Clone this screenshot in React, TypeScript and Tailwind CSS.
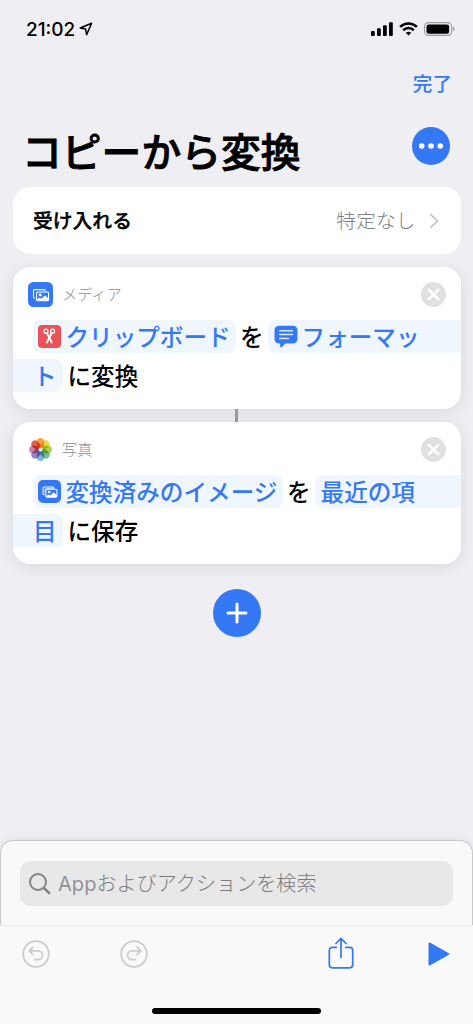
import type { ReactNode } from 'react';

const PhotosStack = ({ className, layered }: { className?: string; layered?: boolean }) => (
  <svg viewBox="0 0 25 25" className={className} fill="none">
    <rect width="25" height="25" rx="5.5" fill="#3478f6" />
    <path d="M7.4 16H6.8A1.3 1.3 0 0 1 5.5 14.7V8.9A1.3 1.3 0 0 1 6.8 7.6H16A1.3 1.3 0 0 1 17.3 8.9V9.3" stroke="#fff" strokeWidth="1.1" />
    {layered && <path d="M7.6 14V10.6A1.2 1.2 0 0 1 8.8 9.4H17" stroke="#fff" strokeWidth="0.8" />}
    <rect x="8.6" y="10" width="12" height="8.8" rx="1.3" stroke="#fff" strokeWidth="1.1" />
    <circle cx="12.2" cy="13" r="1.4" fill="#fff" />
    <path d="M8.8 17.4L11.3 15.8L13.2 16.8L17 13.4L20.4 16.2V18.6H8.8Z" fill="#fff" />
  </svg>
);

const PETALS = [
  { angle: 0, color: '#f3a53c' },
  { angle: 45, color: '#eadb45' },
  { angle: 90, color: '#b0d05a' },
  { angle: 135, color: '#74bd96' },
  { angle: 180, color: '#82b1e4' },
  { angle: 225, color: '#9583c0' },
  { angle: 270, color: '#cb82b0' },
  { angle: 315, color: '#ea5c48' }
];

const PhotosFlower = () => (
  <svg viewBox="-12.5 -12.5 25 25" className="w-[25px] h-[25px] isolate">
    {PETALS.map(({ angle, color }) => (
      <rect
        key={angle}
        x="-3.7"
        y="-11.4"
        width="7.4"
        height="9.8"
        rx="3.7"
        fill={color}
        transform={`rotate(${angle})`}
        className="mix-blend-multiply"
      />
    ))}
    <circle r="1" fill="#fff" />
  </svg>
);

const Scissors = () => (
  <svg viewBox="0 0 23 23" className="w-[23px] h-[23px] shrink-0" fill="none">
    <rect width="23" height="23" rx="4" fill="#eb5159" />
    <g stroke="#fff" strokeWidth="1.3" strokeLinecap="round">
      <circle cx="8" cy="6.2" r="2" />
      <circle cx="14.6" cy="6.2" r="2" />
      <path d="M9 8.2L13.7 17.4M13.6 8.2L8.9 17.4" strokeWidth="2" />
    </g>
  </svg>
);

const MessageBubble = () => (
  <svg viewBox="0 0 24 23" className="w-6 h-[23px] shrink-0">
    <path d="M5 .7H19A4.5 4.5 0 0 1 23.5 5.2V14A4.5 4.5 0 0 1 19 18.5H11.5L7.6 22.3Q6.2 23 6.2 21.5V18.5H5A4.5 4.5 0 0 1 .5 14V5.2A4.5 4.5 0 0 1 5 .7Z" fill="#3478f6" />
    <path d="M5.6 5.8H18.4M5.6 9.6H18.4M5.6 13.4H14.4" stroke="#dbe8fd" strokeWidth="1.5" strokeLinecap="round" />
  </svg>
);

const CloseButton = () => (
  <button className="ml-auto">
    <svg viewBox="0 0 25 25" className="w-[25px] h-[25px] block">
      <circle cx="12.5" cy="12.5" r="12.5" fill="#e0e0e2" />
      <path d="M7.8 7.8L17.2 17.2M17.2 7.8L7.8 17.2" stroke="#fff" strokeWidth="2.6" strokeLinecap="round" />
    </svg>
  </button>
);

interface ActionCardProps {
  icon: ReactNode;
  app: string;
  children: ReactNode;
}

const ActionCard = ({ icon, app, children }: ActionCardProps) => (
  <section className="h-[142.5px] rounded-[17px] bg-white pt-[15px] overflow-hidden shadow-[0_3px_16px_rgba(0,0,0,0.09)]">
    <header className="flex items-center pl-[15px] pr-[15px] h-[25px]">
      {icon}
      <span className="ml-[9.5px] pt-[2px] text-[15.2px] leading-none font-light text-[#8e8e92]">{app}</span>
      <CloseButton />
    </header>
    <div className="mt-[13px] flex flex-col gap-1.5 text-[23.6px] leading-[35px] font-medium whitespace-nowrap">
      {children}
    </div>
  </section>
);

const StatusBar = () => (
  <div className="flex h-[58px] items-center pl-[26px] pr-[18px]">
    <span className="font-['Inter'] text-[19px] leading-none font-medium">21:02</span>
    <svg viewBox="0 0 14 14" className="ml-[4px] w-[14px] h-[14px]">
      <path d="M12.6 1.2L1.2 6L6.6 7.1L7.6 12.7Z" fill="none" stroke="#000" strokeWidth="1.5" strokeLinejoin="round" />
    </svg>
    <div className="ml-auto flex items-center gap-[6px]">
      <svg viewBox="0 0 22 14" className="w-[22px] h-[14px]">
        <rect x="0" y="9" width="3.8" height="5" rx="1" />
        <rect x="6" y="6.2" width="3.8" height="7.8" rx="1" />
        <rect x="12" y="3.3" width="3.8" height="10.7" rx="1" />
        <rect x="18" y="0.3" width="3.8" height="13.7" rx="1" />
      </svg>
      <svg viewBox="0 0 19 14" className="w-[19px] h-[14px]" fill="none" stroke="#000" strokeWidth="2.6">
        <path d="M1.1 4.9A12 12 0 0 1 17.9 4.9" />
        <path d="M4.2 8.2A7.6 7.6 0 0 1 14.8 8.2" />
        <path d="M6.8 10.8Q9.5 8.7 12.2 10.8L9.5 13.6Z" fill="#000" stroke="none" />
      </svg>
      <svg viewBox="0 0 31 14" className="w-[31px] h-[14px]">
        <rect x="0.6" y="0.6" width="27" height="12.8" rx="3.8" fill="none" stroke="#9c9ca0" strokeWidth="1.1" />
        <rect x="2.5" y="2.4" width="22.6" height="9.3" rx="2.2" />
        <path d="M29 4.7Q30.8 5.6 30.8 7Q30.8 8.4 29 9.3Z" fill="#9c9ca0" />
      </svg>
    </div>
  </div>
);

const HistoryIcon = ({ flipped }: { flipped?: boolean }) => (
  <svg
    viewBox="0 0 28 28"
    className={`w-7 h-7 ${flipped ? '-scale-x-100' : ''}`}
    fill="none"
    stroke="#cbcbcd"
    strokeWidth="1.8"
    strokeLinecap="round"
    strokeLinejoin="round"
  >
    <circle cx="14" cy="14" r="12.8" />
    <path d="M10.9 7.2L7.2 10.9L10.9 14.6M7.6 10.9H16.1A4.4 4.4 0 0 1 16.1 19.7H12.7" />
  </svg>
);

export default function App() {
  return (
    <div className="flex h-[1024px] w-[473px] flex-col overflow-hidden bg-[#eeeef3] font-['Inter','Noto_Sans_CJK_JP',sans-serif] text-black">
      <StatusBar />

      <div className="flex h-[50px] items-center justify-end pt-[4px] pr-[21px]">
        <button className="text-[19.6px] leading-none font-medium text-[#3478f6]">完了</button>
      </div>

      <div className="flex h-[79px] items-center justify-between pl-[22px] pr-[23.5px]">
        <h1 className="pt-[11px] text-[39.8px] leading-none font-medium whitespace-nowrap [-webkit-text-stroke:0.8px_#000]">
          コピーから変換
        </h1>
        <button className="-mt-[3px]">
          <svg viewBox="0 0 38 38" className="block w-[38px] h-[38px]">
            <circle cx="19" cy="19" r="19" fill="#3478f6" />
            <g fill="#fff">
              <circle cx="9.7" cy="19" r="2.8" />
              <circle cx="19" cy="19" r="2.8" />
              <circle cx="28.3" cy="19" r="2.8" />
            </g>
          </svg>
        </button>
      </div>

      <main className="ml-[12.5px] mr-[12.5px] flex flex-col">
        <div className="flex h-[66.5px] items-center rounded-[17px] bg-white pl-[20.5px] pr-[22px] text-[19.8px] leading-none">
          <span className="pt-[4px] font-medium [-webkit-text-stroke:0.4px_#000]">受け入れる</span>
          <span className="ml-auto pt-[4px] font-light text-[#828286]">特定なし</span>
          <svg viewBox="0 0 10 16" className="ml-[13px] mt-[2px] w-[10px] h-4" fill="none">
            <path d="M1.3 1.2L8.4 8L1.3 14.8" stroke="#c2c2c5" strokeWidth="1.7" />
          </svg>
        </div>

        <div className="mt-[13px]">
          <ActionCard icon={<PhotosStack className="w-[25px] h-[25px]" />} app="メディア">
            <div className="flex h-[33px] pl-[20.5px]">
              <span className="flex w-[203px] items-center rounded-lg bg-[#eff6fe] pl-[4.5px] text-[#3478f6]">
                <Scissors />
                <span className="ml-[5px] pt-[2px]">クリップボード</span>
              </span>
              <span className="ml-[4px]">を</span>
              <span className="ml-[4px] flex flex-1 items-center rounded-l-lg bg-[#eff6fe] pl-[6px] text-[#3478f6]">
                <MessageBubble />
                <span className="ml-[4px] pt-[2px]">フォーマッ</span>
              </span>
            </div>
            <div className="flex h-[33px]">
              <span className="w-[50px] rounded-r-lg bg-[#eff6fe] pl-[20.5px] text-[#3478f6]">ト</span>
              <span className="ml-[5px]">に変換</span>
            </div>
          </ActionCard>
        </div>

        <div className="h-[12.5px] w-[3px] self-center bg-[#9b9b9f]" />

        <ActionCard icon={<PhotosFlower />} app="写真">
          <div className="flex h-[33px] pl-[20.5px]">
            <span className="flex w-[250px] items-center rounded-lg bg-[#eff6fe] pl-[4.5px] text-[#3478f6]">
              <PhotosStack layered className="w-[23px] h-[23px] shrink-0" />
              <span className="ml-[5px] pt-[2px]">変換済みのイメージ</span>
            </span>
            <span className="ml-[4px]">を</span>
            <span className="ml-[4px] flex-1 rounded-l-lg bg-[#eff6fe] pl-[6px] text-[#3478f6]">最近の項</span>
          </div>
          <div className="flex h-[33px]">
            <span className="w-[50px] rounded-r-lg bg-[#eff6fe] pl-[20.5px] text-[#3478f6]">目</span>
            <span className="ml-[5px]">に保存</span>
          </div>
        </ActionCard>

        <button className="mt-[25px] self-center">
          <svg viewBox="0 0 48 48" className="block w-12 h-12">
            <circle cx="24" cy="24" r="24" fill="#3478f6" />
            <path d="M24 15V33M15 24H33" stroke="#fff" strokeWidth="3" strokeLinecap="round" />
          </svg>
        </button>
      </main>

      {/* Bottom sheet */}
      <div className="mt-auto h-[85px] rounded-t-[13px] border border-b-0 border-[#c9c9cd] bg-[#f9f9f9] px-[19px] pt-5 shadow-[0_-2px_10px_rgba(0,0,0,0.05)]">
        <div className="flex h-[45px] items-center rounded-[11px] bg-[#e8e8e8] pl-[9px]">
          <svg viewBox="0 0 22 22" className="w-[22px] h-[22px]" fill="none" stroke="#848487" strokeLinecap="round">
            <circle cx="9" cy="9" r="8" strokeWidth="2" />
            <path d="M15 15L20.2 20.2" strokeWidth="2.5" />
          </svg>
          <span className="ml-[7px] pt-[2px] text-[20.1px] leading-none font-light text-[#7c7c80]">
            <span className="font-normal text-[#929295]">App</span>およびアクションを検索
          </span>
        </div>
      </div>

      <footer className="flex h-[99px] flex-col border-t border-[#ececec] bg-[#f9f9f9]">
        <div className="flex h-[56px] items-center pl-[21.5px]">
          <HistoryIcon />
          <div className="ml-[70px] h-7">
            <HistoryIcon flipped />
          </div>
          <svg viewBox="0 0 26 32" className="ml-[180.5px] -mt-[3px] w-[26px] h-8" fill="none" stroke="#3478f6" strokeWidth="1.7" strokeLinecap="round" strokeLinejoin="round">
            <path d="M8.2 10.4H4.3A3 3 0 0 0 1.3 13.4V27.8A3 3 0 0 0 4.3 30.8H21.7A3 3 0 0 0 24.7 27.8V13.4A3 3 0 0 0 21.7 10.4H17.8" />
            <path d="M13 20.4V1.6M7.9 6.5L13 1.4L18.1 6.5" />
          </svg>
          <svg viewBox="0 0 22 24" className="ml-[74px] -mt-px w-[22px] h-6">
            <path d="M1.4 1.4V22.6L20.4 12Z" fill="#3478f6" stroke="#3478f6" strokeWidth="1.8" strokeLinejoin="round" />
          </svg>
        </div>
        <div className="mt-[26px] h-[6px] w-[169px] self-center rounded-full bg-black" />
      </footer>
    </div>
  );
}
